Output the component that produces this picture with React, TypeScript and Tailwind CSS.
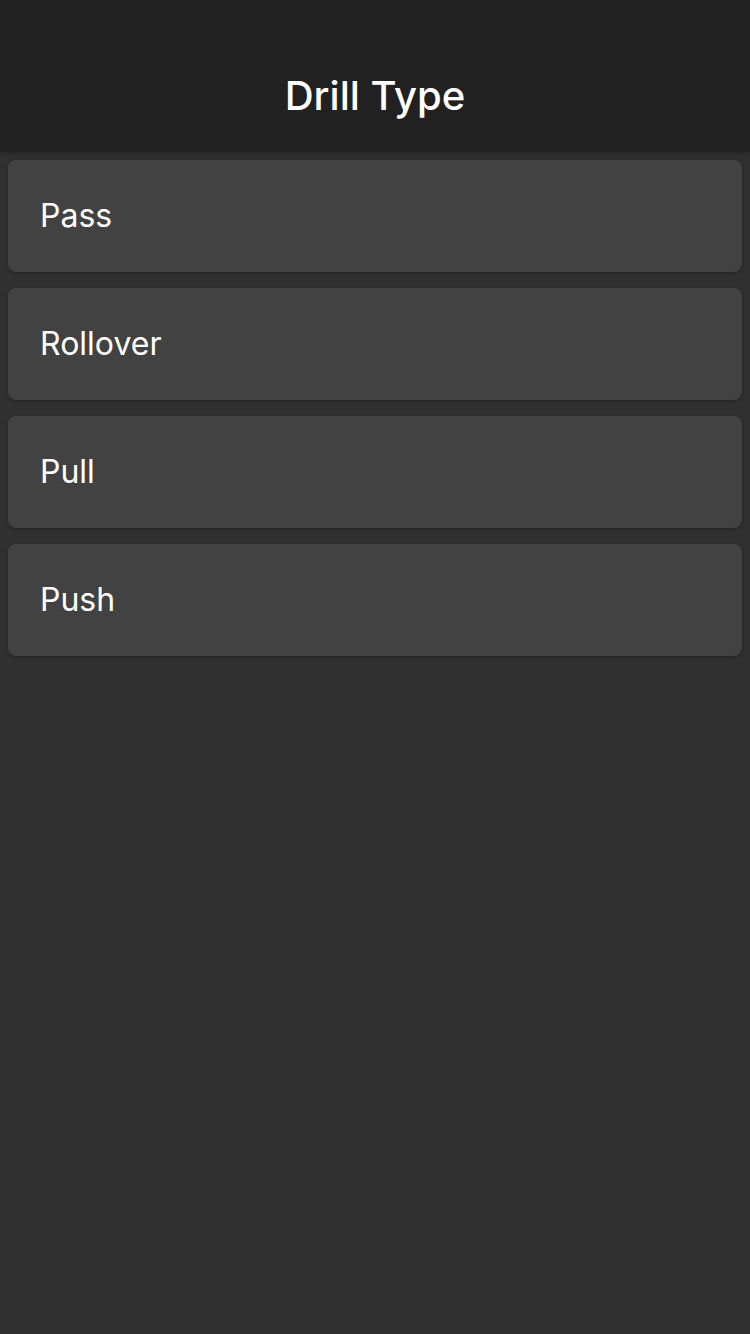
import React from "react";

const items = ["Pass", "Rollover", "Pull", "Push"];

export default function App() {
  return (
    <div className="min-h-[1334px] w-[750px] bg-[#303030] flex flex-col" style={{ fontFamily: "Inter, 'Noto Sans', sans-serif" }}>
      <div className="h-[152px] bg-[#212121] flex items-end justify-center pb-[36px] shadow-[0_2px_4px_rgba(0,0,0,0.2)]">
        <span className="text-white text-[40px] font-medium leading-none">Drill Type</span>
      </div>
      <div className="flex flex-col gap-4 px-2 pt-2">
        {items.map((t) => (
          <div key={t} className="h-[112px] rounded-lg bg-[#424242] shadow-[0_1px_3px_rgba(0,0,0,0.3)] flex items-center px-8">
            <span className="text-white text-[32px] leading-none">{t}</span>
          </div>
        ))}
      </div>
    </div>
  );
}
